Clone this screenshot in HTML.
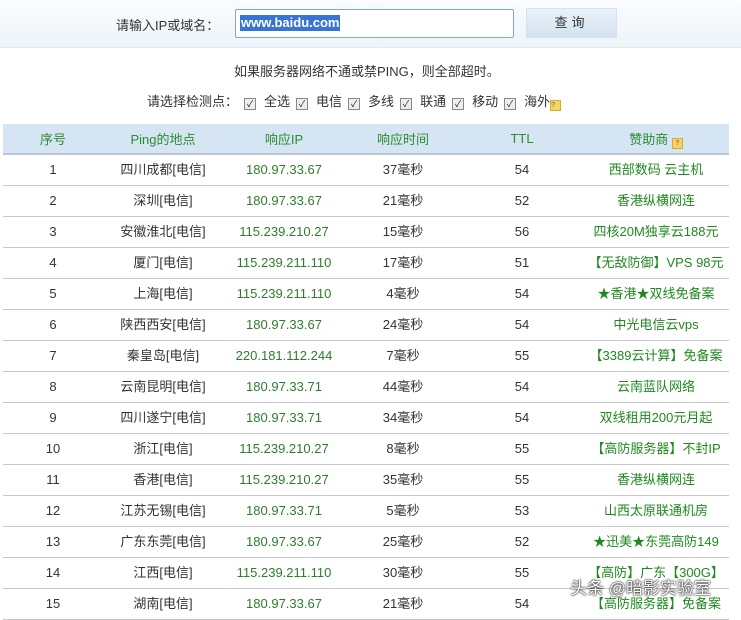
<!DOCTYPE html><html><head><meta charset="utf-8"><style>
body{margin:0;width:741px;height:612px;overflow:hidden;background:#fff;font-family:"Liberation Sans","Noto Sans CJK SC",sans-serif;font-size:13px;color:#333;position:relative}
.top{position:absolute;left:0;top:0;width:741px;height:47px;background:linear-gradient(#fafcfe,#eef4f9);border-bottom:1px solid #e3ebf2}
.abs{position:absolute;white-space:nowrap}
.inp{position:absolute;left:235px;top:9px;width:277px;height:27px;border:1px solid #7fa7cf;background:#fff;border-radius:2px}
.inp span{position:absolute;left:4px;top:5px;background:#3874d2;color:#fff;font-size:13px;font-weight:bold;padding:0 1px;line-height:16px}
.btn{position:absolute;left:526px;top:8px;width:89px;height:28px;background:linear-gradient(#eaf2f9,#d3e3f0);border:1px solid #d6e2ec;text-align:center;line-height:28px;letter-spacing:4px}
.cb{display:inline-block;width:10px;height:10px;border:1px solid #888;background:#eee;vertical-align:-1px;margin:0 8px 0 6px;font-size:9px;line-height:10px;text-align:center;color:#222}
table{position:absolute;left:3px;top:124px;width:726px;border-collapse:collapse;table-layout:fixed}
th{height:29px;padding:0;background:#d5e5f4;color:#2e8b2e;font-weight:normal;border-bottom:2px solid #b8c8d8}
td{height:30px;padding:0;line-height:30px;border-bottom:1px solid #c8c8c8;text-align:center;white-space:nowrap}
td.g{color:#2e7d2e}td.s{color:#1e8a1e}
.q{display:inline-block;width:9px;height:9px;background:#f3d36a;border:1px solid #d9ad2a;vertical-align:-1px;font-size:7px;line-height:9px;color:#855}
</style></head><body>
<div class="top"></div>
<div class="abs" style="left:116px;top:15px">请输入IP或域名：</div>
<div class="inp"><span>www.baidu.com</span></div>
<div class="btn">查询</div>
<div class="abs" style="left:234px;top:61px">如果服务器网络不通或禁PING，则全部超时。</div>
<div class="abs" style="left:147px;top:91px">请选择检测点：<span class="cb">✓</span>全选<span class="cb">✓</span>电信<span class="cb">✓</span>多线<span class="cb">✓</span>联通<span class="cb">✓</span>移动<span class="cb">✓</span>海外<span class="q">?</span></div>
<table>
<colgroup><col style="width:100px"><col style="width:120px"><col style="width:122px"><col style="width:116px"><col style="width:122px"><col></colgroup>
<tr><th>序号</th><th>Ping的地点</th><th>响应IP</th><th>响应时间</th><th>TTL</th><th>赞助商 <span class="q">?</span></th></tr>
<tr><td>1</td><td>四川成都[电信]</td><td class="g">180.97.33.67</td><td>37毫秒</td><td>54</td><td class="s">西部数码 云主机</td></tr>
<tr><td>2</td><td>深圳[电信]</td><td class="g">180.97.33.67</td><td>21毫秒</td><td>52</td><td class="s">香港纵横网连</td></tr>
<tr><td>3</td><td>安徽淮北[电信]</td><td class="g">115.239.210.27</td><td>15毫秒</td><td>56</td><td class="s">四核20M独享云188元</td></tr>
<tr><td>4</td><td>厦门[电信]</td><td class="g">115.239.211.110</td><td>17毫秒</td><td>51</td><td class="s">【无敌防御】VPS 98元</td></tr>
<tr><td>5</td><td>上海[电信]</td><td class="g">115.239.211.110</td><td>4毫秒</td><td>54</td><td class="s">★香港★双线免备案</td></tr>
<tr><td>6</td><td>陕西西安[电信]</td><td class="g">180.97.33.67</td><td>24毫秒</td><td>54</td><td class="s">中光电信云vps</td></tr>
<tr><td>7</td><td>秦皇岛[电信]</td><td class="g">220.181.112.244</td><td>7毫秒</td><td>55</td><td class="s">【3389云计算】免备案</td></tr>
<tr><td>8</td><td>云南昆明[电信]</td><td class="g">180.97.33.71</td><td>44毫秒</td><td>54</td><td class="s">云南蓝队网络</td></tr>
<tr><td>9</td><td>四川遂宁[电信]</td><td class="g">180.97.33.71</td><td>34毫秒</td><td>54</td><td class="s">双线租用200元月起</td></tr>
<tr><td>10</td><td>浙江[电信]</td><td class="g">115.239.210.27</td><td>8毫秒</td><td>55</td><td class="s">【高防服务器】不封IP</td></tr>
<tr><td>11</td><td>香港[电信]</td><td class="g">115.239.210.27</td><td>35毫秒</td><td>55</td><td class="s">香港纵横网连</td></tr>
<tr><td>12</td><td>江苏无锡[电信]</td><td class="g">180.97.33.71</td><td>5毫秒</td><td>53</td><td class="s">山西太原联通机房</td></tr>
<tr><td>13</td><td>广东东莞[电信]</td><td class="g">180.97.33.67</td><td>25毫秒</td><td>52</td><td class="s">★迅美★东莞高防149</td></tr>
<tr><td>14</td><td>江西[电信]</td><td class="g">115.239.211.110</td><td>30毫秒</td><td>55</td><td class="s">【高防】广东【300G】</td></tr>
<tr><td>15</td><td>湖南[电信]</td><td class="g">180.97.33.67</td><td>21毫秒</td><td>54</td><td class="s">【高防服务器】免备案</td></tr>
</table>
<div class="abs" style="left:570px;top:574px;font-size:17px;color:#fff;text-shadow:0 0 2px #000,0 0 1px #000">头条 @暗影实验室</div>
</body></html>
